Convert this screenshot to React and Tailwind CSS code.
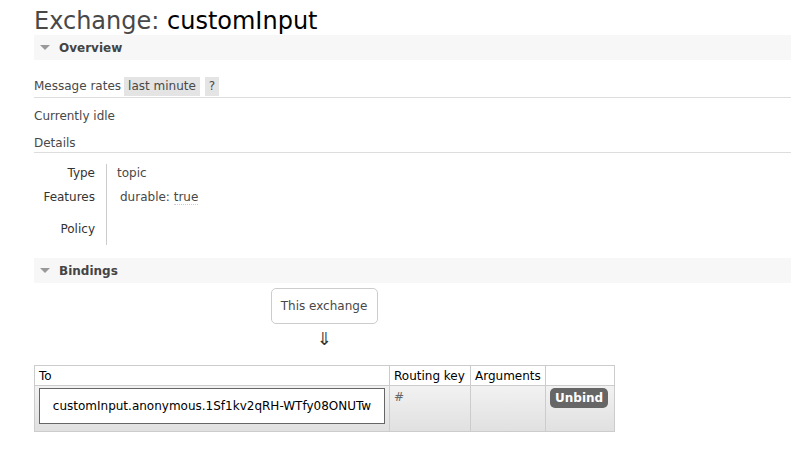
import React from 'react';

const Section = ({ title }) => (
  <div className="flex items-center h-[25px] bg-[#f7f7f7] pl-[6px]">
    <span className="w-0 h-0 border-l-[5px] border-r-[5px] border-t-[5px] border-l-transparent border-r-transparent border-t-[#999]" />
    <span className="ml-[9px] font-bold text-[12px] text-[#444]">{title}</span>
  </div>
);

const DetailRow = ({ label, children, h }) => (
  <div className={`flex items-center ${h}`}>
    <div className="w-[72px] text-right text-[#333] pr-[11px]">{label}</div>
    <div className="self-stretch w-px bg-[#ccc]" />
    <div className="pl-[10px]">{children}</div>
  </div>
);

export default function App() {
  return (
    <div className="min-h-[451px] bg-white pl-[34px] text-[12px] text-[#484848]" style={{ fontFamily: '"DejaVu Sans", Verdana, sans-serif' }}>
      <h1 className="pt-[8px] h-[35px] text-[24px] leading-[26px] text-[#484848]">
        Exchange: <span className="text-black">customInput</span>
      </h1>

      <Section title="Overview" />

      <div className="mt-[16px] flex items-center h-[20px] border-b border-[#ddd] pb-px box-content">
        <span>Message rates</span>
        <span className="ml-[3px] px-[4px] h-[19px] leading-[19px] bg-[#e4e4e4]">last minute</span>
        <span className="ml-[5px] px-[4px] h-[19px] leading-[19px] bg-[#e4e4e4]">?</span>
      </div>

      <div className="mt-[9px] h-[18px] leading-[18px]">Currently idle</div>
      <div className="mt-[9px] h-[18px] leading-[18px]">Details</div>
      <div className="border-b border-[#ddd]" />

      <div className="mt-[11px] flex flex-col">
        <DetailRow label="Type" h="h-[18px]">topic</DetailRow>
        <DetailRow label="Features" h="h-[30px]">
          <span className="ml-[3px]">durable: <span className="border-b border-dotted border-[#ccc]">true</span></span>
        </DetailRow>
        <DetailRow label="Policy" h="h-[33px]"> </DetailRow>
      </div>

      <div className="mt-[13px]">
        <Section title="Bindings" />
      </div>

      <div className="w-[580px] flex flex-col items-center">
        <div className="mt-[5px] w-[107px] h-[36px] flex items-center justify-center border border-[#ccc] rounded-[5px] text-[#484848]">
          This exchange
        </div>
        <div className="mt-[5px] h-[20px] text-[18px] leading-[20px] text-[#333]">⇓</div>
      </div>

      <table className="mt-[16px] w-[581px] table-fixed border-collapse border border-[#ccc] text-[12px]">
        <thead>
          <tr className="h-[20px] bg-white text-black">
            <th className="w-[355px] border border-[#ccc] text-left font-normal px-[4px]">To</th>
            <th className="w-[81px] border border-[#ccc] text-left font-normal px-[4px]">Routing key</th>
            <th className="w-[75px] border border-[#ccc] text-left font-normal px-[4px]">Arguments</th>
            <th className="border border-[#ccc]" />
          </tr>
        </thead>
        <tbody>
          <tr className="h-[46px] bg-gradient-to-b from-[#f2f2f2] to-[#e0e0e0]">
            <td className="border border-[#ccc] px-[4px] align-top pt-[2px] pb-[6px]">
              <div className="h-[36px] flex items-center justify-center bg-white border border-[#666] text-black">
                customInput.anonymous.1Sf1kv2qRH-WTfy08ONUTw
              </div>
            </td>
            <td className="border border-[#ccc] px-[4px] align-top pt-[2px] text-[#666]">#</td>
            <td className="border border-[#ccc]" />
            <td className="border border-[#ccc] align-top pt-[2px] px-[4px]">
              <span className="inline-block px-[5px] h-[20px] leading-[20px] rounded-[5px] bg-[#666] text-white font-bold">Unbind</span>
            </td>
          </tr>
        </tbody>
      </table>
    </div>
  );
}
